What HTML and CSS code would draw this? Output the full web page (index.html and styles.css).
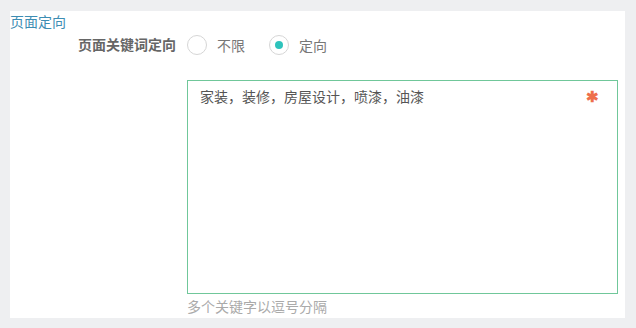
FILE: index.html
```html
<!DOCTYPE html>
<html lang="zh-CN">
<head>
  <meta charset="UTF-8">
  <title>页面定向</title>
  <link rel="stylesheet" href="styles.css">
</head>
<body>
  <div class="panel">
    <div class="section-title">页面定向</div>

    <div class="form-row">
      <div class="row-label">页面关键词定向</div>
      <div class="radios">
        <label class="radio"><span class="dot"></span>不限</label>
        <label class="radio checked"><span class="dot"></span>定向</label>
      </div>
    </div>

    <div class="form-row">
      <div class="row-label"></div>
      <div class="field">
        <div class="keyword-box">
          <span class="keywords">家装，装修，房屋设计，喷漆，油漆</span>
          <span class="required">✱</span>
        </div>
        <div class="hint">多个关键字以逗号分隔</div>
      </div>
    </div>
  </div>
</body>
</html>
```

FILE: styles.css
```css
/* 공통 */
body {
  margin: 0;
  background-color: #eeeff1;
  font-family: "Liberation Sans", "Noto Sans CJK SC", sans-serif;
  font-size: 14px;
  color: #666;
}

.panel {
  background-color: #fff;
  margin: 11px 11px 10px 10px;
  height: 307px;
  overflow: hidden;
}

.section-title {
  color: #3d8db3;
  line-height: 20px;
  margin-top: 1px;
}

.form-row {
  display: flex;
}

.row-label {
  width: 166px;
  padding-right: 1px;
  text-align: right;
  font-weight: bold;
  color: #666;
  line-height: 26px;
  flex-shrink: 0;
}

.radios {
  display: flex;
  margin-left: 10px;
}

.radio {
  display: flex;
  align-items: center;
  height: 26px;
  margin-right: 24px;
  color: #777;
}

.radio .dot {
  width: 18px;
  height: 18px;
  border: 1px solid #d6d6d6;
  border-radius: 50%;
  margin-right: 10px;
  position: relative;
}

.radio.checked .dot::after {
  content: "";
  position: absolute;
  top: 5px;
  left: 5px;
  width: 8px;
  height: 8px;
  border-radius: 50%;
  background-color: #2ec3bc;
}

.field {
  margin-left: 10px;
  margin-top: 22px;
}

.keyword-box {
  width: 431px;
  height: 214px;
  border: 1px solid #70c79a;
  display: flex;
  justify-content: space-between;
  padding: 6px 0 0 12px;
  box-sizing: border-box;
  color: #555;
  line-height: 20px;
}

.required {
  color: #ee6f4b;
  font-size: 15px;
  margin-right: 18px;
  font-weight: bold;
}

.hint {
  color: #aaa;
  margin-top: 3px;
  line-height: 20px;
}
```
